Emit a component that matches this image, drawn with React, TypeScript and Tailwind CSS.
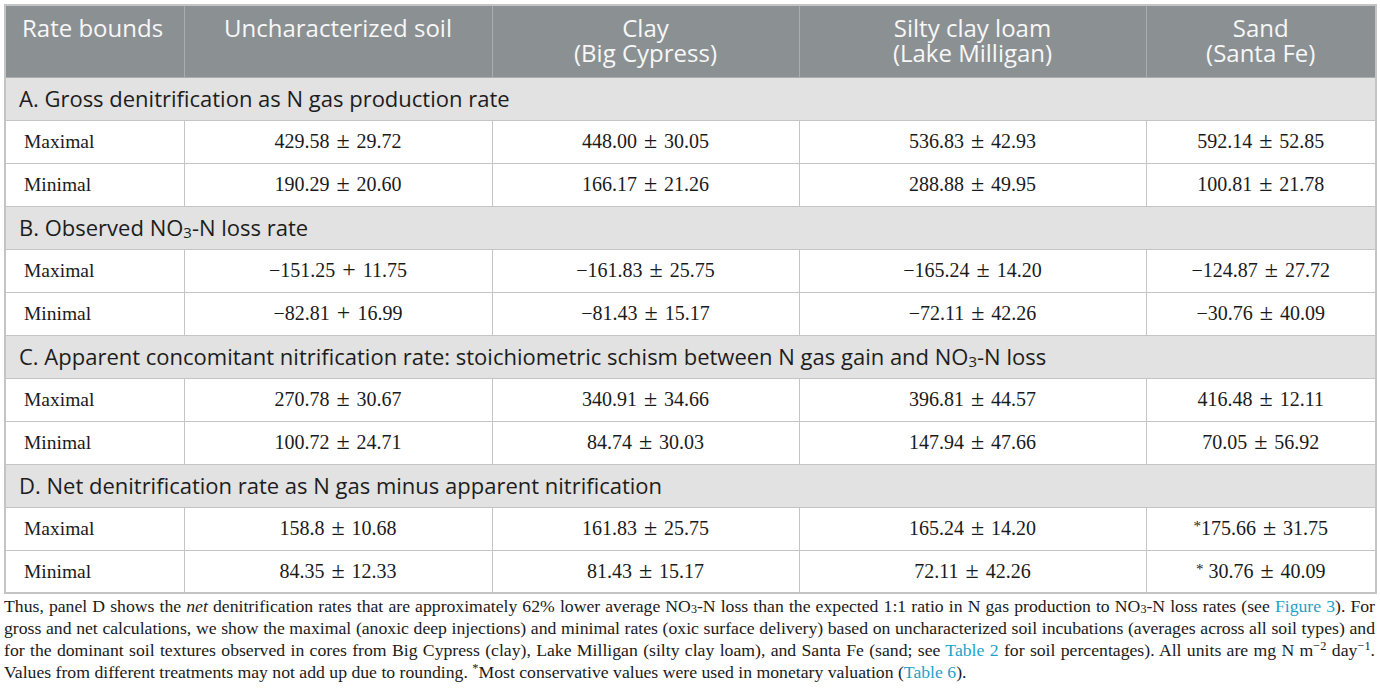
import React from "react";

const sans = "font-['Open_Sans',sans-serif]";
const serif = "font-['Liberation_Serif',serif]";

type Row = [string, string, string, string, string];

const Sub = ({ c }: { c: string }) => (
  <sub className="text-[0.68em] relative top-[0.12em] align-baseline">{c}</sub>
);

const sections: { title: React.ReactNode; rows: Row[] }[] = [
  {
    title: "A. Gross denitrification as N gas production rate",
    rows: [
      ["Maximal", "429.58 ± 29.72", "448.00 ± 30.05", "536.83 ± 42.93", "592.14 ± 52.85"],
      ["Minimal", "190.29 ± 20.60", "166.17 ± 21.26", "288.88 ± 49.95", "100.81 ± 21.78"],
    ],
  },
  {
    title: (
      <>
        B. Observed NO<Sub c="3" />-N loss rate
      </>
    ),
    rows: [
      ["Maximal", "−151.25 + 11.75", "−161.83 ± 25.75", "−165.24 ± 14.20", "−124.87 ± 27.72"],
      ["Minimal", "−82.81 + 16.99", "−81.43 ± 15.17", "−72.11 ± 42.26", "−30.76 ± 40.09"],
    ],
  },
  {
    title: (
      <>
        C. Apparent concomitant nitrification rate: stoichiometric schism between N gas gain and NO
        <Sub c="3" />-N loss
      </>
    ),
    rows: [
      ["Maximal", "270.78 ± 30.67", "340.91 ± 34.66", "396.81 ± 44.57", "416.48 ± 12.11"],
      ["Minimal", "100.72 ± 24.71", "84.74 ± 30.03", "147.94 ± 47.66", "70.05 ± 56.92"],
    ],
  },
  {
    title: "D. Net denitrification rate as N gas minus apparent nitrification",
    rows: [
      ["Maximal", "158.8 ± 10.68", "161.83 ± 25.75", "165.24 ± 14.20", "*175.66 ± 31.75"],
      ["Minimal", "84.35 ± 12.33", "81.43 ± 15.17", "72.11 ± 42.26", "* 30.76 ± 40.09"],
    ],
  },
];

function Value({ v }: { v: string }) {
  const m = v.match(/^(.*?) ([±+]) (.*)$/);
  if (!m) return <>{v}</>;
  let left: React.ReactNode = m[1];
  if (m[1].startsWith("*")) {
    left = (
      <>
        <sup className="text-[0.75em] top-[-0.3em]">*</sup>
        {m[1].slice(1)}
      </>
    );
  }
  return (
    <span className="text-[20px]">
      {left}{" "}
      <span className="inline-block mx-[2px] text-[24px] leading-none">{m[2]}</span>{" "}
      {m[3]}
    </span>
  );
}

const Link = ({ children }: { children: React.ReactNode }) => (
  <span className="text-[#1ea2c6]">{children}</span>
);

const Line = ({ children, last }: { children: React.ReactNode; last?: boolean }) => (
  <div
    className={
      last
        ? "h-[22px] leading-[22px] text-left whitespace-nowrap"
        : "h-[22px] leading-[22px] text-justify [text-align-last:justify] whitespace-nowrap"
    }
  >
    {children}
  </div>
);

export default function App() {
  const border = "border border-[#c4c4c4]";
  return (
    <div className="w-[1380px] h-[700px] bg-white pl-[4px] pt-[4px] overflow-hidden">
      <table className="w-[1371px] border-collapse border-2 border-[#c4c4c4] table-fixed">
        <colgroup>
          <col className="w-[179px]" />
          <col className="w-[308px]" />
          <col className="w-[307px]" />
          <col className="w-[347px]" />
          <col className="w-[230px]" />
        </colgroup>
        <thead>
          <tr className="h-[72px] bg-[#8b9093]">
            {[
              ["Rate bounds"],
              ["Uncharacterized soil"],
              ["Clay", "(Big Cypress)"],
              ["Silty clay loam", "(Lake Milligan)"],
              ["Sand", "(Santa Fe)"],
            ].map((lines, i) => (
              <th
                key={i}
                className={`${sans} align-top font-normal text-[#f7f7f7] text-[24px] leading-[25px] pt-[9px] border border-[#a9adaf] ${
                  i === 0 ? "text-left pl-[16px]" : "text-center"
                }`}
              >
                {lines.map((l, j) => (
                  <div key={j} className="h-[25px]">
                    {l}
                  </div>
                ))}
              </th>
            ))}
          </tr>
        </thead>
        <tbody>
          {sections.map((s, si) => (
            <React.Fragment key={si}>
              <tr className="h-[43px] bg-[#e1e2e1]">
                <td
                  colSpan={5}
                  className={`${sans} ${border} text-[22px] text-[#1d1d1d] pl-[13px] align-middle whitespace-nowrap`}
                >
                  {s.title}
                </td>
              </tr>
              {s.rows.map((r, ri) => (
                <tr key={ri} className="h-[43px]">
                  {r.map((c, ci) => (
                    <td
                      key={ci}
                      className={`${serif} ${border} text-[19.5px] text-[#1a1a1a] align-middle ${
                        ci === 0 ? "text-left pl-[18px]" : "text-center"
                      }`}
                    >
                      {ci === 0 ? c : <Value v={c} />}
                    </td>
                  ))}
                </tr>
              ))}
            </React.Fragment>
          ))}
        </tbody>
      </table>
      <div className={`${serif} w-[1371px] text-[17.7px] text-[#1a1a1a] pt-[1px]`}>
        <Line>
          Thus, panel D shows the <i>net</i> denitrification rates that are approximately 62% lower average NO
          <Sub c="3" />-N loss than the expected 1:1 ratio in N gas production to NO<Sub c="3" />-N loss rates (see{" "}
          <Link>Figure 3</Link>). For
        </Line>
        <Line>
          gross and net calculations, we show the maximal (anoxic deep injections) and minimal rates (oxic surface
          delivery) based on uncharacterized soil incubations (averages across all soil types) and
        </Line>
        <Line>
          for the dominant soil textures observed in cores from Big Cypress (clay), Lake Milligan (silty clay loam),
          and Santa Fe (sand; see <Link>Table 2</Link> for soil percentages). All units are mg N m
          <sup className="text-[0.7em]">−2</sup> day<sup className="text-[0.7em]">−1</sup>.
        </Line>
        <Line last>
          Values from different treatments may not add up due to rounding. <sup className="text-[0.7em]">*</sup>Most
          conservative values were used in monetary valuation (<Link>Table 6</Link>).
        </Line>
      </div>
    </div>
  );
}
